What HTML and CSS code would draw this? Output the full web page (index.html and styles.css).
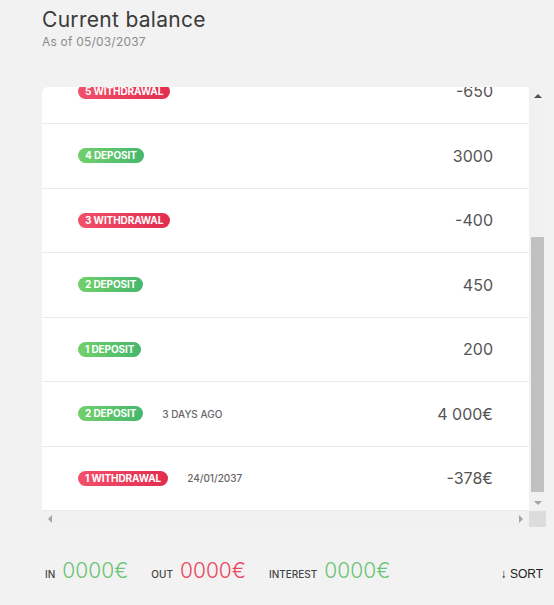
FILE: index.html
```html
<!DOCTYPE html>
<html lang="en">
<head>
<meta charset="utf-8">
<title>Current balance</title>
<link rel="stylesheet" href="styles.css">
</head>
<body>
<div class="page">
  <header class="head">
    <h1 class="title">Current balance</h1>
    <p class="subtitle">As of 05/03/2037</p>
  </header>

  <div class="scrollbox">
    <div class="viewport">
      <ul class="list">
        <li class="row"><div class="left"><span class="badge badge-out">5 Withdrawal</span></div><span class="amount">-650</span></li>
        <li class="row"><div class="left"><span class="badge badge-in">4 Deposit</span></div><span class="amount">3000</span></li>
        <li class="row"><div class="left"><span class="badge badge-out">3 Withdrawal</span></div><span class="amount">-400</span></li>
        <li class="row"><div class="left"><span class="badge badge-in">2 Deposit</span></div><span class="amount">450</span></li>
        <li class="row"><div class="left"><span class="badge badge-in">1 Deposit</span></div><span class="amount">200</span></li>
        <li class="row"><div class="left"><span class="badge badge-in">2 Deposit</span><span class="date">3 days ago</span></div><span class="amount">4&nbsp;000€</span></li>
        <li class="row"><div class="left"><span class="badge badge-out">1 Withdrawal</span><span class="date">24/01/2037</span></div><span class="amount">-378€</span></li>
      </ul>
    </div>
    <div class="vbar">
      <span class="sb-btn"><span class="tri tri-up"></span></span>
      <span class="vtrack"><span class="vthumb"></span></span>
      <span class="sb-btn"><span class="tri tri-down"></span></span>
    </div>
    <div class="hbar">
      <span class="sb-btn"><span class="tri tri-left"></span></span>
      <span class="htrack"></span>
      <span class="sb-btn"><span class="tri tri-right"></span></span>
    </div>
    <div class="corner"></div>
  </div>

  <footer class="summary">
    <div class="totals">
      <div class="total"><span class="label">In</span><span class="value value-in">0000€</span></div>
      <div class="total"><span class="label">Out</span><span class="value value-out">0000€</span></div>
      <div class="total"><span class="label">Interest</span><span class="value value-in">0000€</span></div>
    </div>
    <button class="sort" type="button">↓ SORT</button>
  </footer>
</div>
</body>
</html>
```

FILE: styles.css
```css
* { box-sizing: border-box; }

html, body {
  margin: 0;
  padding: 0;
  background: #f2f2f2;
}

body {
  font-family: Inter, "Open Sans", sans-serif;
  color: #333;
}

.page {
  padding: 8px 11px 0 42px;
}

.head {
  height: 79px;
}

.title {
  margin: 0;
  font-size: 21px;
  line-height: 24px;
  font-weight: 400;
  letter-spacing: 0.3px;
  color: #3a3a3a;
}

.subtitle {
  margin: 2px 0 0;
  font-size: 12px;
  line-height: 16px;
  letter-spacing: 0.2px;
  color: #8c8c8c;
}

.scrollbox {
  width: 504px;
  display: grid;
  grid-template-columns: 487px 17px;
  grid-template-rows: 424px 16px;
}

.viewport {
  overflow: hidden;
  background: #fff;
  border-radius: 6px 0 0 0;
}

.list {
  list-style: none;
  margin: -27.5px 0 0 0;
  padding: 0;
}

.row {
  height: 64.5px;
  display: flex;
  align-items: center;
  justify-content: space-between;
  padding: 0 36px;
  border-bottom: 1px solid #ebebeb;
}

.left {
  display: flex;
  align-items: center;
  gap: 19px;
}

.badge {
  display: inline-block;
  height: 15px;
  line-height: 15px;
  padding: 0 7px;
  border-radius: 8px;
  color: #fff;
  font-size: 10px;
  font-weight: 700;
  text-transform: uppercase;
  letter-spacing: -0.1px;
}

.badge-out {
  background: linear-gradient(90deg, #f2506a, #e22c4e);
}

.badge-in {
  background: linear-gradient(90deg, #72d06a, #45b76e);
}

.date {
  font-size: 10px;
  font-weight: 500;
  color: #666;
  text-transform: uppercase;
}

.amount {
  font-size: 16px;
  color: #555;
}

.vbar, .hbar {
  background: #f1f1f1;
  display: flex;
}

.vbar { flex-direction: column; }

.sb-btn {
  flex: 0 0 17px;
  display: flex;
  align-items: center;
  justify-content: center;
}

.hbar .sb-btn { flex-basis: 16px; }

.vtrack, .htrack { flex: 1; }

.vtrack {
  display: flex;
  justify-content: center;
}

.vthumb {
  width: 13px;
  height: 255px;
  margin-top: 133px;
  background: #c1c1c1;
}

.tri {
  width: 0;
  height: 0;
  border: 4px solid transparent;
}

.tri-up { border-bottom-color: #505050; border-top-width: 0; }
.tri-down { border-top-color: #a3a3a3; border-bottom-width: 0; }
.tri-left { border-right-color: #a3a3a3; border-left-width: 0; }
.tri-right { border-left-color: #a3a3a3; border-right-width: 0; }

.corner { background: #dcdcdc; }

.summary {
  display: flex;
  align-items: baseline;
  justify-content: space-between;
  margin-top: 31px;
  padding-left: 3px;
}

.totals {
  display: flex;
  align-items: baseline;
  gap: 23px;
}

.total {
  display: flex;
  align-items: baseline;
  gap: 7px;
}

.label {
  font-size: 10px;
  font-weight: 500;
  text-transform: uppercase;
  color: #444;
}

.value {
  font-size: 21px;
  font-weight: 300;
}

.value-in { color: #6cc474; }
.value-out { color: #ea4760; }

.sort {
  border: 0;
  background: none;
  padding: 0;
  font-family: "Liberation Sans", Arial, sans-serif;
  font-size: 12px;
  color: #222;
  cursor: pointer;
}
```
